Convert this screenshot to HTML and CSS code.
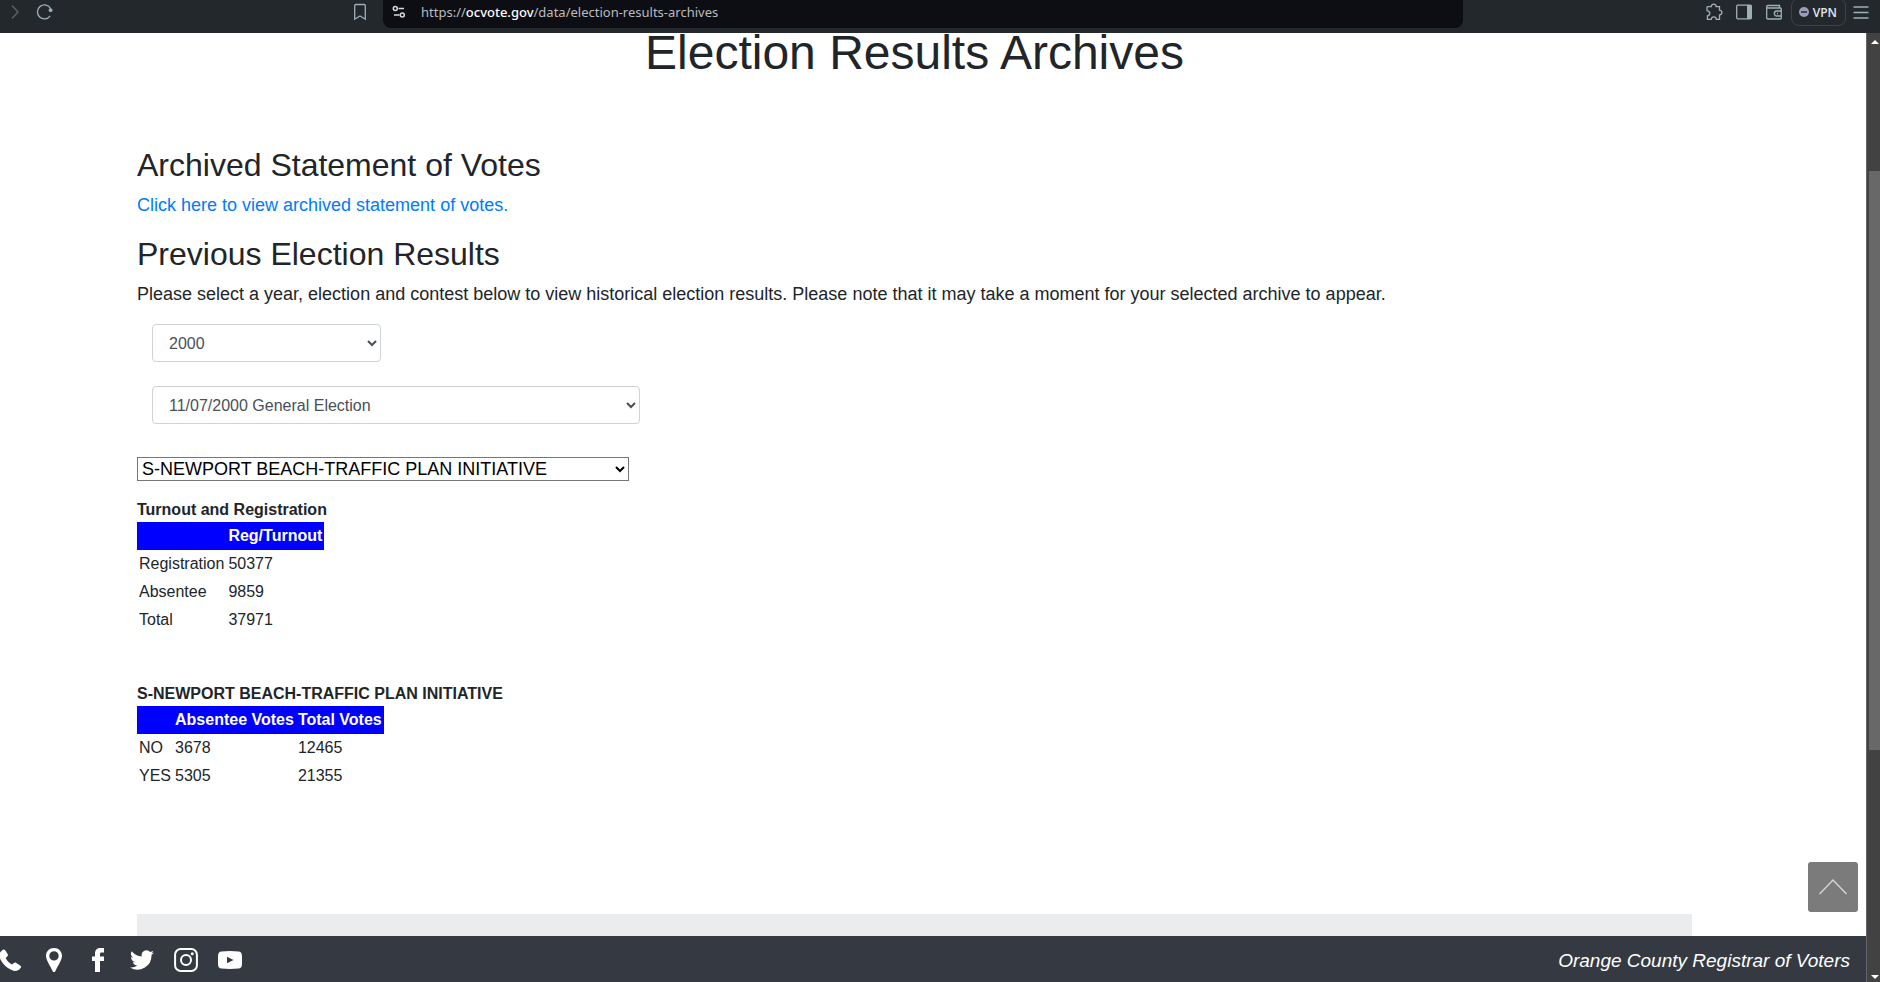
FILE: index.html
```html
<!DOCTYPE html>
<html lang="en">
<head>
    <meta charset="UTF-8">
    <meta name="viewport" content="width=device-width, initial-scale=1.0">
    <title>Election Results Archives</title>
    <link rel="stylesheet" href="styles.css">
</head>
<body>
    <!-- Browser toolbar -->
    <header class="toolbar">
        <div class="toolbar-left">
            <button class="tool forward" aria-label="Forward">
                <svg width="16" height="16" viewBox="0 0 16 16"><path d="M5 1.5l6 6.5-6 6.5"/></svg>
            </button>
            <button class="tool" aria-label="Reload">
                <svg width="18" height="18" viewBox="0 0 18 18"><path d="M14.2 12.9A7 7 0 1 1 14.6 5.6"/><circle class="solid" cx="14.6" cy="7.2" r="1.9"/></svg>
            </button>
            <button class="tool bookmark" aria-label="Bookmark">
                <svg width="14" height="18" viewBox="0 0 14 18"><path d="M1.7 2.5q0-1 1-1h8.6q1 0 1 1v13.7l-5.3-3.3-5.3 3.3z"/></svg>
            </button>
        </div>
        <div class="address">
            <svg width="14" height="14" viewBox="0 0 14 14"><circle cx="3.3" cy="3.5" r="2"/><path d="M6.5 3.5H12M2 10h5.5"/><circle cx="10.3" cy="10" r="2"/></svg>
            <span class="url">https://<span class="domain">ocvote.gov</span>/data/election-results-archives</span>
        </div>
        <div class="toolbar-right">
            <button class="tool" aria-label="Extensions">
                <svg width="18" height="18" viewBox="0 0 18 18"><path d="M2.8 3.6h3.4c.2-1.600 1.200-2.400 2.500-2.400s2.300.8 2.500 2.400h3.300v3.500c1.600.3 2.400 1.200 2.400 2.400s-.8 2.200-2.400 2.500v4.300h-3.100c-.2-1.700-1.100-2.500-2.600-2.500s-2.400.8-2.600 2.500H2.400v-3.300c1.600-.4 2.400-1.300 2.400-2.700s-.9-2.200-2.800-2.600V4.400q0-.8.8-.8z"/></svg>
            </button>
            <button class="tool" aria-label="Sidebar">
                <svg width="18" height="18" viewBox="0 0 18 18"><rect x="1.7" y="2.2" width="14.6" height="13.6" rx="1"/><path class="solid" d="M12 2h4.500v14H12z"/></svg>
            </button>
            <button class="tool" aria-label="Wallet">
                <svg width="18" height="18" viewBox="0 0 18 18"><path d="M14.5 4.5V2.5H2.7q-1 0-1 1v11.500q0 1 1 1h12.6q1 0 1-1V6q0-1-1-1H3q-1.300 0-1.300-1.500M16.300 8h-4.500a2.500 2.500 0 0 0 0 5h4.500M12 10.500h1"/></svg>
            </button>
            <button class="vpn">
                <svg width="10" height="10" viewBox="0 0 10 10"><circle cx="5" cy="5" r="5"/><path d="M2 5h6"/></svg>
                VPN
            </button>
            <button class="tool" aria-label="Menu">
                <svg width="18" height="18" viewBox="0 0 18 18"><path d="M1.5 4h15M1.5 9.5h15M1.5 15h15"/></svg>
            </button>
        </div>
    </header>

    <div class="window">
        <div class="page">
            <main class="content">
                <h1>Election Results Archives</h1>

                <h2>Archived Statement of Votes</h2>
                <p><a href="#">Click here to view archived statement of votes.</a></p>

                <h2>Previous Election Results</h2>
                <p>Please select a year, election and contest below to view historical election results. Please note that it may take a moment for your selected archive to appear.</p>

                <form class="filters">
                    <select class="form-control year" aria-label="Year">
                        <option>2000</option>
                    </select>
                    <select class="form-control election" aria-label="Election">
                        <option>11/07/2000 General Election</option>
                    </select>
                    <select class="contest" aria-label="Contest">
                        <option>S-NEWPORT BEACH-TRAFFIC PLAN INITIATIVE</option>
                    </select>
                </form>

                <section class="result">
                    <h3 id="turnout">Turnout and Registration</h3>
                    <table aria-labelledby="turnout">
                        <thead>
                            <tr><th></th><th>Reg/Turnout</th></tr>
                        </thead>
                        <tbody>
                            <tr><td>Registration</td><td>50377</td></tr>
                            <tr><td>Absentee</td><td>9859</td></tr>
                            <tr><td>Total</td><td>37971</td></tr>
                        </tbody>
                    </table>
                </section>

                <section class="result">
                    <h3 id="votes">S-NEWPORT BEACH-TRAFFIC PLAN INITIATIVE</h3>
                    <table aria-labelledby="votes">
                        <thead>
                            <tr><th></th><th>Absentee Votes</th><th>Total Votes</th></tr>
                        </thead>
                        <tbody>
                            <tr><td>NO</td><td>3678</td><td>12465</td></tr>
                            <tr><td>YES</td><td>5305</td><td>21355</td></tr>
                        </tbody>
                    </table>
                </section>

                <div class="panel"></div>
            </main>

            <button class="to-top" aria-label="Back to top">
                <svg width="30" height="18" viewBox="0 0 30 18"><path d="M1.5 16L15 2l13.5 14"/></svg>
            </button>

            <!-- Footer -->
            <footer class="footer">
                <nav class="social">
                    <a href="#" aria-label="Phone">
                        <svg width="24" height="24" viewBox="0 0 24 24"><path d="M4.200 2.200C5.500 1 6.600 1.300 7.400 2.500l2.200 3.400c.6 1 .4 1.800-.4 2.600L7.700 10c1.200 2.800 3.400 5.100 6.400 6.600l1.700-1.500c.8-.7 1.600-.8 2.500-.2l3.800 2.500c1.200.8 1.300 1.800.3 2.900-2.500 2.800-5.200 3.300-8.700 1.700C8 19.600 3.500 14.800 1.500 9.200.6 6.500 1.800 4.200 4.200 2.200z"/></svg>
                    </a>
                    <a href="#" aria-label="Location">
                        <svg width="24" height="24" viewBox="0 0 24 24"><path fill-rule="evenodd" d="M12 0c4.600 0 8 3.400 8 7.800 0 4.200-3.600 9-6.300 14.600-.9 2.100-2.500 2.100-3.400 0C7.600 16.800 4 12 4 7.800 4 3.400 7.400 0 12 0zm0 3.200a4.700 4.700 0 1 0 0 9.400 4.700 4.700 0 0 0 0-9.400z"/></svg>
                    </a>
                    <a href="#" aria-label="Facebook">
                        <svg width="24" height="24" viewBox="0 0 24 24"><path d="M9 24V13H6V8.500h3V5.800C9 2 11 0 14.500 0H18v4.500h-2.300c-1.500 0-1.700.6-1.700 1.800v2.200h4V13h-4v11z"/></svg>
                    </a>
                    <a href="#" aria-label="Twitter">
                        <svg width="24" height="24" viewBox="0 0 24 24"><path d="M24 4.600a10 10 0 0 1-2.800.8 5 5 0 0 0 2.100-2.700 10 10 0 0 1-3.100 1.200 4.900 4.900 0 0 0-8.400 4.500A14 14 0 0 1 1.700 3.200a4.900 4.900 0 0 0 1.500 6.500 5 5 0 0 1-2.200-.6c0 2.300 1.600 4.400 3.900 4.900a5 5 0 0 1-2.200.1 4.900 4.900 0 0 0 4.600 3.400A9.900 9.900 0 0 1 0 19.500a14 14 0 0 0 21.500-12.400A10 10 0 0 0 24 4.600z"/></svg>
                    </a>
                    <a href="#" aria-label="Instagram">
                        <svg class="line" width="24" height="24" viewBox="0 0 24 24"><rect x="1.100" y="1.100" width="21.800" height="21.800" rx="5.500"/><circle cx="12" cy="12" r="5"/><circle class="dot" cx="18.300" cy="5.700" r="1.500"/></svg>
                    </a>
                    <a href="#" aria-label="YouTube">
                        <svg width="24" height="24" viewBox="0 0 24 24"><path fill-rule="evenodd" d="M3.500 3.400q8.500-.8 17 0 3.200.3 3.400 3.600.3 5 0 10-.2 3.300-3.400 3.600-8.500.8-17 0Q.3 20.300.1 17q-.3-5 0-10 .2-3.300 3.400-3.600zM9 8.800v6.400l6.500-3.200z"/></svg>
                    </a>
                </nav>
                <em>Orange County Registrar of Voters</em>
            </footer>
        </div>

        <!-- Scrollbar -->
        <div class="scrollbar">
            <svg width="8" height="4" viewBox="0 0 8 4"><path d="M4 0l4 4H0z"/></svg>
            <div class="track">
                <div class="thumb"></div>
            </div>
            <svg width="8" height="4" viewBox="0 0 8 4"><path d="M0 0h8L4 4z"/></svg>
        </div>
    </div>
</body>
</html>
```
FILE: styles.css
```css
* {
    box-sizing: border-box;
}

body {
    margin: 0;
    min-height: 100vh;
    display: flex;
    flex-direction: column;
    font-family: "Liberation Sans", Arial, sans-serif;
    font-size: 18px;
    line-height: 27px;
    color: #212529;
    background-color: #fff;
}

button {
    padding: 0;
    border: none;
    background: none;
    cursor: pointer;
}

svg {
    display: block;
}

/* Browser toolbar */
.toolbar {
    display: flex;
    flex-shrink: 0;
    height: 33px;
    background-color: #23282c;
}

.toolbar-left,
.toolbar-right {
    display: flex;
    align-items: center;
    height: 24px;
}

.toolbar-left {
    width: 383px;
    gap: 13px;
    padding: 0 16px 0 7px;
}

.toolbar-right {
    width: 417px;
    justify-content: flex-end;
    gap: 12px;
    padding-right: 10px;
}

.tool svg {
    fill: none;
    stroke: #9db0b8;
    stroke-width: 1.3;
}

.tool .solid {
    fill: #9db0b8;
    stroke: none;
}

.forward svg {
    stroke: #5d666b;
}

.bookmark {
    margin-left: auto;
}

.address {
    flex: 1;
    display: flex;
    align-items: center;
    gap: 15px;
    height: 28px;
    padding: 0 9px 4px;
    border-radius: 0 0 8px 8px;
    background-color: #0d0e13;
}

.address svg {
    fill: none;
    stroke: #d5d9db;
    stroke-width: 1.5;
}

.url {
    font-family: "Noto Sans", "Open Sans", sans-serif;
    font-size: 13px;
    color: #b9bcbf;
}

.domain {
    font-weight: 500;
    color: #fff;
}

.vpn {
    display: flex;
    align-items: center;
    gap: 4px;
    height: 28px;
    padding: 0 8px 0 7px;
    margin: 0 -6px 0 -4px;
    border: 1px solid #3b4348;
    border-radius: 8px;
    font-family: "Open Sans", "Noto Sans", sans-serif;
    font-size: 12px;
    font-weight: 600;
    color: #e4e7e8;
}

.vpn circle {
    fill: #9c9db8;
}

.vpn path {
    stroke: #23282c;
    stroke-width: 1.5;
}

/* Page area with scrollbar */
.window {
    flex: 1;
    display: flex;
}

.page {
    flex: 1;
    display: flex;
    flex-direction: column;
    position: relative;
    min-width: 0;
}

.content {
    flex: 1;
    display: flex;
    flex-direction: column;
    padding: 0 174px 0 137px;
}

h1,
h2,
h3 {
    margin: 0;
    font-weight: 400;
}

h1 {
    margin-bottom: 73px;
    font-size: 48px;
    line-height: 40px;
    text-align: center;
}

h2 {
    margin-bottom: 8px;
    font-size: 32px;
    line-height: 38px;
}

p {
    margin: 0 0 16px;
}

a {
    color: #007bff;
    text-decoration: none;
}

/* Drop-downs */
.filters {
    display: flex;
    flex-direction: column;
    align-items: flex-start;
    margin-bottom: 17px;
}

.form-control {
    height: 38px;
    margin: 0 0 24px 15px;
    padding: 6px 12px;
    border: 1px solid #ced4da;
    border-radius: 4px;
    font-family: inherit;
    font-size: 16px;
    color: #495057;
    background-color: #fff;
}

.year {
    width: 229px;
}

.election {
    width: 488px;
}

.contest {
    width: 492px;
    height: 24px;
    margin-top: 9px;
    font-family: inherit;
    font-size: 18px;
    color: #000;
    background-color: #fff;
}

/* Result tables */
.result {
    margin-bottom: 48px;
    font-size: 16px;
    line-height: 24px;
}

h3 {
    font-size: 16px;
    font-weight: 700;
    line-height: 24px;
}

table {
    border-collapse: collapse;
}

th,
td {
    height: 28px;
    padding: 2px;
    text-align: left;
}

th {
    color: #fff;
    background-color: #0000ff;
}

.panel {
    flex: 1;
    min-height: 20px;
    margin-top: 76px;
    background-color: #ebecee;
}

.to-top {
    position: absolute;
    right: 8px;
    bottom: 70px;
    display: flex;
    align-items: center;
    justify-content: center;
    width: 50px;
    height: 50px;
    border-radius: 3px;
    background-color: #7b7b7b;
}

.to-top svg {
    fill: none;
    stroke: #d3d3d3;
    stroke-width: 1.5;
}

/* Footer */
.footer {
    display: flex;
    flex-shrink: 0;
    align-items: center;
    justify-content: space-between;
    height: 46px;
    padding: 2px 16px 0 0;
    font-size: 19px;
    color: #fff;
    background-color: #353a42;
}

.social {
    display: flex;
    gap: 20px;
    margin-left: -2px;
}

.social svg {
    fill: #fff;
}

.social .line {
    fill: none;
    stroke: #fff;
    stroke-width: 2;
}

.social .dot {
    fill: #fff;
    stroke: none;
}

/* Scrollbar */
.scrollbar {
    display: flex;
    flex-direction: column;
    align-items: center;
    width: 14px;
    padding: 7px 0 3px 2px;
    border-left: 1px solid #666;
    background-color: #424242;
}

.scrollbar svg {
    fill: #fff;
}

.track {
    flex: 1;
    display: flex;
    flex-direction: column;
    align-self: stretch;
    padding-top: 127px;
}

.thumb {
    flex: 0 0 72%;
    background-color: #686868;
}
```
